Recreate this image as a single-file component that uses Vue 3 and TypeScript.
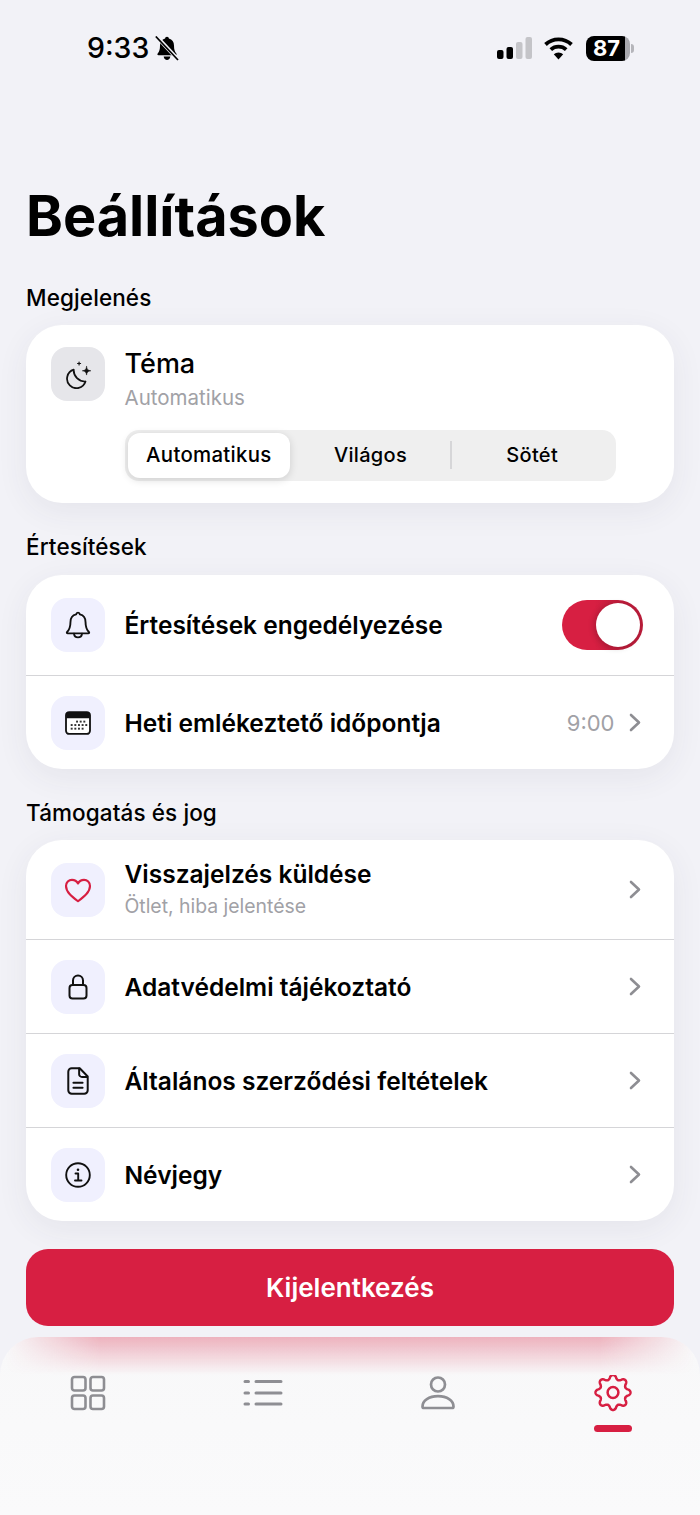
<script setup lang="ts">
const seg: string[] = ['Automatikus', 'Világos', 'Sötét']

function gearPath(cx: number, cy: number, mid: number, amp: number, teeth: number): string {
  const pts: string[] = []
  const n = 240
  for (let i = 0; i < n; i++) {
    const t = (i / n) * Math.PI * 2
    const c = Math.cos(teeth * t)
    const shaped = Math.sign(c) * Math.pow(Math.abs(c), 0.75)
    const r = mid + amp * shaped
    pts.push(`${(cx + r * Math.sin(t)).toFixed(2)} ${(cy - r * Math.cos(t)).toFixed(2)}`)
  }
  return 'M' + pts.join('L') + 'Z'
}
const gear = gearPath(20, 17.5, 15.4, 2.1, 8)
</script>

<template>
  <div class="page">
    <header class="status">
      <div class="status-left">
        <span class="time">9:33</span>
        <svg class="mute" width="24" height="25" viewBox="0 0 24 25">
          <path d="M12 .8c-1.100 0-1.800.8-1.900 1.800C6.800 3.500 5 6.100 5 9.500c0 4-.7 6-2.300 8-.6.800-.3 1.700.8 1.700h17c1.100 0 1.400-.9.800-1.700-1.600-2-2.300-4-2.300-8 0-3.400-1.800-6-5.100-6.900-.1-1-.8-1.800-1.900-1.800z" fill="#000"/>
          <path d="M8.700 20.500h6.600c-.2 2-1.600 3.500-3.300 3.500s-3.100-1.500-3.300-3.500z" fill="#000"/>
          <path d="M2.500 1.500 22.500 23" stroke="#f2f2f7" stroke-width="4"/>
          <path d="M.8 .5 23 24" stroke="#000" stroke-width="1.700"/>
        </svg>
      </div>
      <div class="status-right">
        <svg width="36" height="22" viewBox="0 0 36 22">
          <rect x="0" y="13" width="6.500" height="9" rx="2" fill="#000"/>
          <rect x="9.500" y="10" width="6.500" height="12" rx="2" fill="#000"/>
          <rect x="19" y="5" width="6.500" height="17" rx="2" fill="#c4c4c8"/>
          <rect x="28.500" y="0" width="6.500" height="22" rx="2" fill="#c4c4c8"/>
        </svg>
        <svg class="wifi" width="31" height="24" viewBox="0 0 31 24">
          <path d="M2.500 8.500a19 19 0 0 1 26 0" fill="none" stroke="#000" stroke-width="3.800"/>
          <path d="M7.800 13.700a11.400 11.400 0 0 1 15.400 0" fill="none" stroke="#000" stroke-width="3.800"/>
          <path d="M15.500 23.500 10.800 18.300a6.800 6.800 0 0 1 9.400 0z" fill="#000"/>
        </svg>
        <div class="battery">
          <div class="batt-body"><span>87</span></div>
          <div class="batt-cap"></div>
        </div>
      </div>
    </header>

    <main class="content">
      <h1 class="title">Beállítások</h1>

      <h2 class="section first">Megjelenés</h2>
      <section class="card theme">
        <div class="theme-top">
          <div class="tile grey">
            <svg width="30" height="30" viewBox="0 0 28 28" fill="none" stroke="#111" stroke-width="1.650" stroke-linecap="round" stroke-linejoin="round">
              <path d="M10 10A8.800 8.800 0 1 0 21 21 10.500 10.500 0 0 1 10 10Z"/>
              <path d="M22 7c.4 2.800 1.200 3.600 4 4-2.800.4-3.600 1.200-4 4-.4-2.800-1.200-3.600-4-4 2.800-.4 3.600-1.200 4-4z" fill="#111" stroke-width=".5"/>
              <path d="M15 2.800v2.800M13.600 4.200h2.800" stroke-width="1.100"/>
            </svg>
          </div>
          <div class="theme-text">
            <div class="row-title">Téma</div>
            <div class="row-sub">Automatikus</div>
          </div>
        </div>
        <div class="segmented">
          <div v-for="(s, i) in seg" :key="s" class="seg" :class="{ active: i === 0 }">{{ s }}</div>
          <i class="seg-sep"></i>
        </div>
      </section>

      <h2 class="section">Értesítések</h2>
      <section class="card">
        <div class="row r100">
          <div class="tile">
            <svg width="32" height="32" viewBox="0 0 28 28" fill="none" stroke="#111" stroke-width="1.650" stroke-linecap="round" stroke-linejoin="round">
              <path d="M14 3.200c-.9 0-1.500.6-1.600 1.500C9 5.500 7.400 8 7.400 11.500c0 4-.7 6.300-3 8.600-.4.500-.2 1.200.6 1.200h18c.8 0 1-.7.6-1.200-2.300-2.300-3-4.600-3-8.600 0-3.500-1.600-6-5-6.800-.1-.9-.7-1.500-1.600-1.500z"/>
              <path d="M10.500 21.500c.2 2.100 1.700 3.300 3.500 3.300s3.300-1.200 3.500-3.300"/>
            </svg>
          </div>
          <div class="row-title grow">Értesítések engedélyezése</div>
          <div class="toggle"><i></i></div>
        </div>
        <div class="row r94 bordered">
          <div class="tile">
            <svg width="30" height="30" viewBox="0 0 28 28">
              <rect x="2.800" y="3.800" width="22.400" height="20.400" rx="3" fill="#fff" stroke="#111" stroke-width="1.700"/>
              <path d="M3 9.500V6.500A2.700 2.700 0 0 1 5.700 4h16.600A2.700 2.700 0 0 1 25 6.500v3z" fill="#111"/>
              <g fill="#333">
                <rect x="12.200" y="11.800" width="1.800" height="1.800"/><rect x="15.600" y="11.800" width="1.800" height="1.800"/><rect x="19" y="11.800" width="1.800" height="1.800"/>
                <rect x="7.200" y="15" width="1.800" height="1.800"/><rect x="10.600" y="15" width="1.800" height="1.800"/><rect x="14" y="15" width="1.800" height="1.800"/><rect x="17.400" y="15" width="1.800" height="1.800"/><rect x="20.800" y="15" width="1.800" height="1.800"/>
                <rect x="7.200" y="18.400" width="1.800" height="1.800"/><rect x="10.600" y="18.400" width="1.800" height="1.800"/><rect x="14" y="18.400" width="1.800" height="1.800"/><rect x="17.400" y="18.400" width="1.800" height="1.800"/>
              </g>
            </svg>
          </div>
          <div class="row-title grow">Heti emlékeztető időpontja</div>
          <span class="value">9:00</span>
          <svg class="chev" width="12" height="19" viewBox="0 0 12 19"><path d="M2 2l8 7.500L2 17" fill="none" stroke="#8e8e93" stroke-width="2.600" stroke-linecap="round" stroke-linejoin="round"/></svg>
        </div>
      </section>

      <h2 class="section tight">Támogatás és jog</h2>
      <section class="card">
        <div class="row r99">
          <div class="tile">
            <svg width="30" height="30" viewBox="0 0 28 28" fill="none" stroke="#d71f42" stroke-width="2" stroke-linejoin="round">
              <path d="M14 24.500C8 20 2.800 15.800 2.800 10.300 2.800 6.800 5.400 4.500 8.400 4.500c2.400 0 4.400 1.200 5.600 3.400 1.200-2.200 3.200-3.400 5.600-3.400 3 0 5.600 2.300 5.600 5.800 0 5.500-5.200 9.700-11.200 14.200z"/>
            </svg>
          </div>
          <div class="grow two-line">
            <div class="row-title">Visszajelzés küldése</div>
            <div class="row-sub small">Ötlet, hiba jelentése</div>
          </div>
          <svg class="chev" width="12" height="19" viewBox="0 0 12 19"><path d="M2 2l8 7.500L2 17" fill="none" stroke="#8e8e93" stroke-width="2.600" stroke-linecap="round" stroke-linejoin="round"/></svg>
        </div>
        <div class="row r94 bordered">
          <div class="tile">
            <svg width="28" height="28" viewBox="0 0 28 28" fill="none" stroke="#111" stroke-width="2" stroke-linecap="round" stroke-linejoin="round">
              <rect x="5.500" y="12" width="17" height="13.500" rx="3"/>
              <path d="M9 12V7.500a5 5 0 0 1 10 0V12"/>
            </svg>
          </div>
          <div class="row-title grow">Adatvédelmi tájékoztató</div>
          <svg class="chev" width="12" height="19" viewBox="0 0 12 19"><path d="M2 2l8 7.500L2 17" fill="none" stroke="#8e8e93" stroke-width="2.600" stroke-linecap="round" stroke-linejoin="round"/></svg>
        </div>
        <div class="row r94 bordered">
          <div class="tile">
            <svg width="32" height="32" viewBox="0 0 28 28" fill="none" stroke="#111" stroke-width="1.750" stroke-linecap="round" stroke-linejoin="round">
              <path d="M15.500 2.800H8.500A3 3 0 0 0 5.500 5.800v16.400a3 3 0 0 0 3 3h11a3 3 0 0 0 3-3V10z"/>
              <path d="M15 3v5a2.500 2.500 0 0 0 2.500 2.500H22"/>
              <path d="M10 15.500h8M10 20h8"/>
            </svg>
          </div>
          <div class="row-title grow">Általános szerződési feltételek</div>
          <svg class="chev" width="12" height="19" viewBox="0 0 12 19"><path d="M2 2l8 7.500L2 17" fill="none" stroke="#8e8e93" stroke-width="2.600" stroke-linecap="round" stroke-linejoin="round"/></svg>
        </div>
        <div class="row r94 bordered">
          <div class="tile">
            <svg width="28" height="28" viewBox="0 0 28 28" fill="none" stroke="#111" stroke-width="1.900" stroke-linecap="round" stroke-linejoin="round">
              <circle cx="14" cy="14" r="11.800"/>
              <circle cx="14" cy="8.700" r="1.300" fill="#111" stroke="none"/>
              <path d="M11.500 12.500H14.200V19.500M11 19.500H17.500"/>
            </svg>
          </div>
          <div class="row-title grow">Névjegy</div>
          <svg class="chev" width="12" height="19" viewBox="0 0 12 19"><path d="M2 2l8 7.500L2 17" fill="none" stroke="#8e8e93" stroke-width="2.600" stroke-linecap="round" stroke-linejoin="round"/></svg>
        </div>
      </section>

      <button class="logout" type="button">Kijelentkezés</button>
    </main>

    <nav class="tabbar">
      <div class="tab">
        <svg width="36" height="36" viewBox="0 0 36 36" fill="none" stroke="#8e8e93" stroke-width="2.600" stroke-linejoin="round">
          <rect x="2" y="2" width="13.500" height="13.500" rx="2.500"/>
          <rect x="20.500" y="2" width="13.500" height="13.500" rx="2.500"/>
          <rect x="2" y="20.500" width="13.500" height="13.500" rx="2.500"/>
          <rect x="20.500" y="20.500" width="13.500" height="13.500" rx="2.500"/>
        </svg>
      </div>
      <div class="tab">
        <svg width="40" height="36" viewBox="0 0 40 36" fill="none" stroke="#8e8e93" stroke-width="3" stroke-linecap="round">
          <path d="M2 6.500h3.500M2 18h3.500M2 29h3.500"/>
          <path d="M13 6.500h25M13 18h25M13 29h25"/>
        </svg>
      </div>
      <div class="tab">
        <svg width="36" height="36" viewBox="0 0 36 36" fill="none" stroke="#8e8e93" stroke-width="2.700" stroke-linejoin="round">
          <circle cx="18" cy="9.500" r="7"/>
          <path d="M2.500 31.500c0-6 6.500-10.300 15.500-10.300s15.500 4.300 15.500 10.300c0 .9-.6 1.500-1.500 1.500H4c-.9 0-1.500-.6-1.500-1.500z"/>
        </svg>
      </div>
      <div class="tab active">
        <svg width="40" height="38" viewBox="0 0 40 38" fill="none" stroke="#d71f42" stroke-width="2.500" stroke-linejoin="round">
          <path :d="gear"/>
          <circle cx="20" cy="17.500" r="5.400"/>
        </svg>
        <i class="tab-bar"></i>
      </div>
    </nav>
  </div>
</template>

<style scoped>
.page {
  width: 700px;
  height: 1515px;
  overflow: hidden;
  background: #f2f2f7;
  display: flex;
  flex-direction: column;
  font-family: Inter, "Noto Sans", sans-serif;
  color: #000;
}
.status {
  height: 161px;
  flex: none;
  display: flex;
  justify-content: space-between;
  align-items: flex-start;
  padding: 33px 66px 0 87px;
  box-sizing: border-box;
}
.status-left, .status-right { display: flex; align-items: center; }
.status-left { gap: 6px; }
.time { font-size: 28.5px; font-weight: 500; line-height: 30px; }
.status-right { height: 30px; gap: 12px; }
.status-right > svg:first-child { margin-right: -2px; }
.battery { display: flex; align-items: center; gap: 1px; }
.batt-body {
  width: 44px; height: 25px; border-radius: 8px;
  background: linear-gradient(90deg, #000 89%, #a9a9ae 89%);
  color: #fff; font-size: 22px; font-weight: 700; line-height: 25px; text-align: center;
}
.batt-body span { display: inline-block; margin-left: -3px; }
.batt-cap { width: 3px; height: 9px; border-radius: 0 3px 3px 0; background: #b5b5ba; }
.content { flex: 1; padding: 0 26px; }
.title { margin: 0; font-size: 55.8px; line-height: 66px; font-weight: 700; letter-spacing: 0; padding-top: 22px; }
.section { margin: 30px 0 15px; font-size: 22.5px; line-height: 27px; font-weight: 500; letter-spacing: .1px; }
.section.tight { margin: 30px 0 14px; }
.section.first { margin: 35px 0 14px; }
.card {
  background: #fff;
  border-radius: 36px;
  box-shadow: 0 8px 32px rgba(60, 60, 90, .07);
  overflow: hidden;
}
.theme { height: 178px; padding: 22px 25px 0; box-sizing: border-box; }
.theme-top { display: flex; gap: 19.5px; }
.theme-text { padding-top: 2px; }
.tile {
  width: 54px; height: 54px; flex: none;
  border-radius: 16px;
  background: #f0f0fe;
  display: flex; align-items: center; justify-content: center;
}
.tile.grey { background: #e6e6ea; }
.row-title { font-size: 24.5px; line-height: 30px; font-weight: 600; }
.theme .row-title { font-weight: 500; font-size: 27px; }
.row-sub { font-size: 20.5px; line-height: 26px; color: #a1a1a6; margin-top: 6px; }
.row-sub.small { margin-top: 4px; font-size: 19.4px; }
.two-line { padding-bottom: 1px; }
.segmented {
  position: relative;
  margin: 19px 33px 0 74px;
  height: 51px;
  padding: 3px;
  box-sizing: border-box;
  border-radius: 14px;
  background: #efefef;
  display: grid;
  grid-template-columns: repeat(3, 1fr);
}
.seg {
  display: flex; align-items: center; justify-content: center;
  padding-bottom: 2px;
  font-size: 20px; font-weight: 500; border-radius: 12px;
  letter-spacing: .3px;
}
.seg.active { font-size: 20.4px; background: #fff; box-shadow: 0 2px 8px rgba(0, 0, 0, .14); }
.seg-sep { position: absolute; left: 325px; top: 11px; width: 2px; height: 28px; background: #d6d6d8; }
.row { display: flex; align-items: center; padding: 0 33px 0 25px; gap: 19.5px; box-sizing: border-box; }
.bordered { border-top: 1px solid #d5d5d8; }
.r100 { height: 100px; }
.r99 { height: 99px; }
.r94 { height: 94px; }
.grow { flex: 1; min-width: 0; }
.value { font-size: 22px; color: #a1a1a6; margin-right: -5px; }
.chev { flex: none; }
.toggle {
  width: 81px; height: 50px; border-radius: 25px; flex: none; margin-right: -2px;
  background: linear-gradient(90deg, #d71f42 40%, #bb1c3a 80%);
  position: relative;
}
.toggle i {
  position: absolute; right: 3px; top: 3px; width: 44px; height: 44px;
  border-radius: 50%; background: #fff;
  box-shadow: -2px 1px 6px rgba(0, 0, 0, .2);
}
.logout {
  display: block; width: 100%; height: 77px; margin-top: 28px;
  border: 0; border-radius: 22px; background: #d71f42;
  color: #fff; font: 600 26px Inter, sans-serif;
}
.tabbar {
  flex: none;
  height: 178px;
  position: relative;
  border-radius: 38px 38px 0 0;
  background: linear-gradient(180deg, #f8f8f9, #fafafb);
  display: grid;
  grid-template-columns: repeat(4, 175px);
  overflow: hidden;
}
.tabbar::before {
  content: "";
  position: absolute; left: 0; right: 0; top: 0; height: 38px;
  background: linear-gradient(180deg, rgba(215, 31, 66, .32), rgba(215, 31, 66, 0));
  -webkit-mask-image: linear-gradient(90deg, transparent 5px, #000 100px, #000 600px, transparent 695px);
  mask-image: linear-gradient(90deg, transparent 5px, #000 100px, #000 600px, transparent 695px);
}
.tab { position: relative; display: flex; flex-direction: column; align-items: center; padding-top: 38px; }
.tab-bar { display: block; width: 38px; height: 7px; border-radius: 4px; background: #d71f42; margin-top: 12px; }
</style>

<style>
html, body { margin: 0; background: #f2f2f7; }
</style>
